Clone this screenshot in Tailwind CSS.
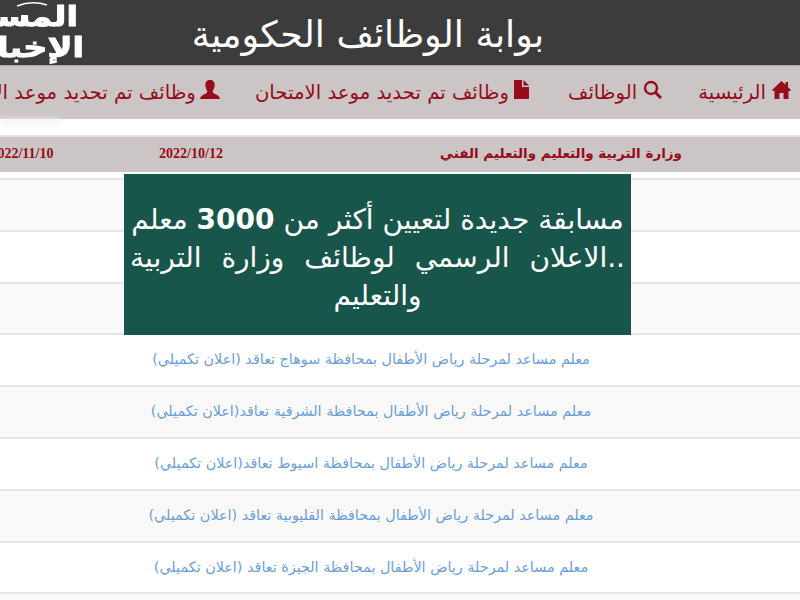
<!DOCTYPE html>
<html lang="ar" dir="rtl">
  <head>
    <meta charset="UTF-8" />
    <title>بوابة الوظائف الحكومية</title>
    <script src="https://cdn.jsdelivr.net/npm/@tailwindcss/browser@4"></script>
  </head>
  <body class="relative w-[800px] h-[600px] overflow-hidden bg-white font-['DejaVu_Sans',sans-serif]">
    <!-- header -->
    <header class="h-[65px] bg-[#3c3c3c] flex overflow-hidden">
      <h1 class="mr-[256px] w-[352px] shrink-0 text-[36.3px] leading-[70px] text-white whitespace-nowrap">بوابة الوظائف الحكومية</h1>
      <div class="relative w-[192px] shrink-0 overflow-hidden" dir="ltr">
        <div class="absolute right-[108px] top-0 w-[120px] text-white font-bold text-[28px] leading-[30px] whitespace-nowrap [-webkit-text-stroke:1px_white]" dir="rtl">
          <div class="mr-[6px] h-[30px] mt-[2px] origin-right scale-x-[1.2]">المسا</div>
          <div class="h-[30px] mt-[1px] origin-right scale-x-[1.2]">الإخبار</div>
          <svg class="absolute left-[52px] top-[1px]" width="32" height="6" viewBox="0 0 32 6" fill="none" stroke="white" stroke-width="1.5"><path d="M1 5 Q16 -1 31 4"/></svg>
        </div>
      </div>
    </header>

    <!-- nav -->
    <nav class="h-[54px] bg-[#cbc5c5] border-t border-[#aaa] flex items-center pr-[9px] text-[#970c1a] text-[19.7px] whitespace-nowrap overflow-hidden">
      <a class="flex items-center gap-[6px] shrink-0 ml-[36px]">
        <svg class="w-[19px] h-[18px] -mt-[5px]" viewBox="0 0 19 18" fill="currentColor"><path d="M9.5 0 L13.5 3.8 V1 H16 V6.2 L19 9 L18 10 H16.5 V18 H11.5 V12 H7.500 V18 H2.5 V10 H1 L0 9 Z"/></svg>
        <span>الرئيسية</span>
      </a>
      <a class="flex items-center gap-[6px] shrink-0 ml-[39px]">
        <svg class="w-[19px] h-[19px] -mt-[5px]" viewBox="0 0 19 19" fill="none" stroke="currentColor" stroke-width="2.4"><circle cx="8" cy="8" r="6"/><path d="M12.5 12.5 L18 18" stroke-width="3"/></svg>
        <span>الوظائف</span>
      </a>
      <a class="flex items-center gap-[5px] shrink-0 ml-[35px]">
        <svg class="w-[15px] h-[19px] -mt-[5px]" viewBox="0 0 15 19" fill="currentColor"><path d="M0 0 H8 V7 H15 V19 H0 Z"/><path d="M9.5 0 L15 5.5 H9.5 Z"/></svg>
        <span>وظائف تم تحديد موعد الامتحان</span>
      </a>
      <a class="flex items-center gap-[4px] shrink-0">
        <svg class="w-[20px] h-[19px] -mt-[5px]" viewBox="0 0 20 19" fill="currentColor"><path d="M10 0 C13.5 0 15 2.5 14.6 6 C14.3 8.5 13.4 10 12.6 11 C12.6 12.6 13.5 13.4 15.5 14.2 C18 15.2 19.5 16 20 19 H0 C0.5 16 2 15.2 4.5 14.2 C6.5 13.4 7.4 12.6 7.4 11 C6.6 10 5.7 8.5 5.4 6 C5 2.5 6.500 0 10 0 Z"/></svg>
        <span>وظائف تم تحديد موعد الامتحان</span>
      </a>
    </nav>

    <!-- table -->
    <div class="relative mt-[16px]">
      <div class="absolute left-0 -top-[16px] w-[60px] h-[6px] bg-[#f3f3f3] blur-[3px]"></div>
      <div class="w-[800px] h-[37px] flex items-center pb-[3px] bg-[#cbc5c5] border-t-2 border-[#e2e2e2] text-[#970c1a] font-bold whitespace-nowrap">
        <div class="w-[478px] shrink-0 text-center text-[13.5px]">وزارة التربية والتعليم والتعليم الفني</div>
        <div class="w-[262px] shrink-0 text-center text-[14px] font-['Liberation_Serif',serif]">2022/10/12</div>
        <div class="w-[76px] shrink-0 text-center text-[14px] font-['Liberation_Serif',serif]">2022/11/10</div>
      </div>
      <div class="h-[8px] border-b-2 border-[#e5e5e5]"></div>
      <div class="w-[858px] text-[14.35px] text-center text-[#6a9ed8] whitespace-nowrap">
        <div class="h-[51.8px] bg-[#f9f9f9] border-b-2 border-[#e5e5e5]"></div>
        <div class="h-[51.8px] bg-white border-b-2 border-[#e5e5e5]"></div>
        <div class="h-[51.8px] bg-[#f9f9f9] border-b-2 border-[#e5e5e5]"></div>
        <div class="h-[51.8px] leading-[48px] bg-white border-b-2 border-[#e5e5e5]"><a>معلم مساعد لمرحلة رياض الأطفال بمحافظة سوهاج تعاقد (اعلان تكميلي)</a></div>
        <div class="h-[51.8px] leading-[48px] bg-[#f9f9f9] border-b-2 border-[#e5e5e5]"><a>معلم مساعد لمرحلة رياض الأطفال بمحافظة الشرقية تعاقد(اعلان تكميلي)</a></div>
        <div class="h-[51.8px] leading-[48px] bg-white border-b-2 border-[#e5e5e5]"><a>معلم مساعد لمرحلة رياض الأطفال بمحافظة اسيوط تعاقد(اعلان تكميلي)</a></div>
        <div class="h-[51.8px] leading-[48px] bg-[#f9f9f9] border-b-2 border-[#e5e5e5]"><a>معلم مساعد لمرحلة رياض الأطفال بمحافظة القليوبية تعاقد (اعلان تكميلي)</a></div>
        <div class="h-[51.8px] leading-[48px] bg-white border-b-2 border-[#e5e5e5]"><a>معلم مساعد لمرحلة رياض الأطفال بمحافظة الجيزة تعاقد (اعلان تكميلي)</a></div>
        <div class="h-[51.8px] bg-[#f9f9f9]"></div>
      </div>
    </div>

    <!-- popup over the table -->
    <div class="absolute left-[124px] top-[174px] w-[507px] h-[161px] bg-[#18564b] text-white text-center text-[28px] leading-[38px] pt-[27px] whitespace-nowrap">
      <div>مسابقة جديدة لتعيين أكثر من <b>3000</b> معلم</div>
      <div class="[word-spacing:11px]">..الاعلان الرسمي لوظائف وزارة التربية</div>
      <div>والتعليم</div>
    </div>
  </body>
</html>
